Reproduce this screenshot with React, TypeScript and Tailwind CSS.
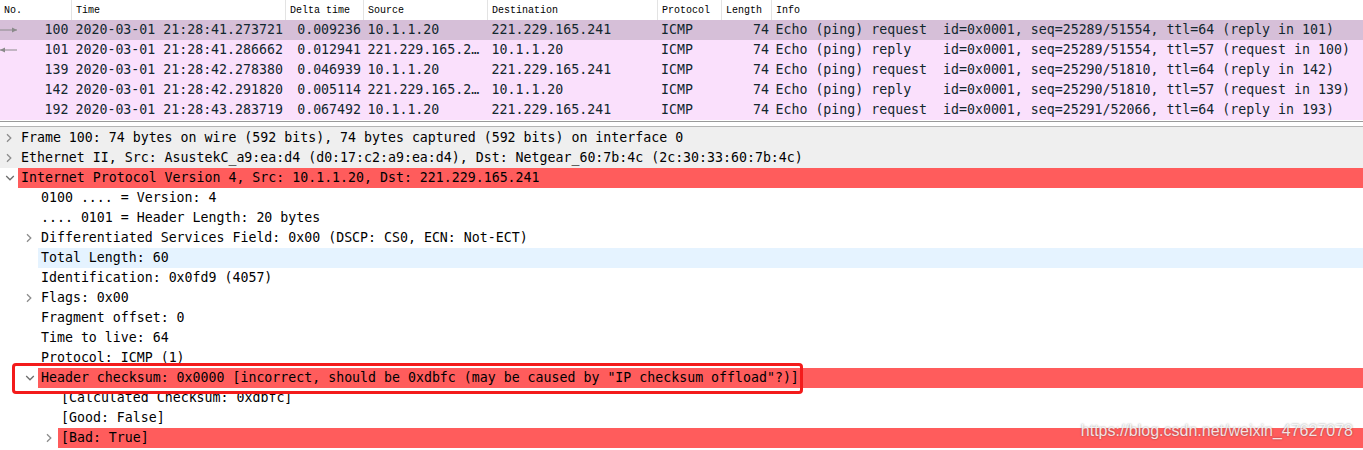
import React from "react";

type Pkt = {
  no: string;
  time: string;
  delta: string;
  src: string;
  dst: string;
  info: string;
  sel?: boolean;
  arrow?: "right" | "left";
};

const packets: Pkt[] = [
  {
    no: "100",
    time: "2020-03-01 21:28:41.273721",
    delta: "0.009236",
    src: "10.1.1.20",
    dst: "221.229.165.241",
    info: "Echo (ping) request  id=0x0001, seq=25289/51554, ttl=64 (reply in 101)",
    sel: true,
    arrow: "right",
  },
  {
    no: "101",
    time: "2020-03-01 21:28:41.286662",
    delta: "0.012941",
    src: "221.229.165.2…",
    dst: "10.1.1.20",
    info: "Echo (ping) reply    id=0x0001, seq=25289/51554, ttl=57 (request in 100)",
    arrow: "left",
  },
  {
    no: "139",
    time: "2020-03-01 21:28:42.278380",
    delta: "0.046939",
    src: "10.1.1.20",
    dst: "221.229.165.241",
    info: "Echo (ping) request  id=0x0001, seq=25290/51810, ttl=64 (reply in 142)",
  },
  {
    no: "142",
    time: "2020-03-01 21:28:42.291820",
    delta: "0.005114",
    src: "221.229.165.2…",
    dst: "10.1.1.20",
    info: "Echo (ping) reply    id=0x0001, seq=25290/51810, ttl=57 (request in 139)",
  },
  {
    no: "192",
    time: "2020-03-01 21:28:43.283719",
    delta: "0.067492",
    src: "10.1.1.20",
    dst: "221.229.165.241",
    info: "Echo (ping) request  id=0x0001, seq=25291/52066, ttl=64 (reply in 193)",
  },
];

type Node = {
  text: string;
  level: number;
  toggle?: "closed" | "open";
  bg?: "gray" | "red" | "blue";
};

const nodes: Node[] = [
  { text: "Frame 100: 74 bytes on wire (592 bits), 74 bytes captured (592 bits) on interface 0", level: 0, toggle: "closed", bg: "gray" },
  { text: "Ethernet II, Src: AsustekC_a9:ea:d4 (d0:17:c2:a9:ea:d4), Dst: Netgear_60:7b:4c (2c:30:33:60:7b:4c)", level: 0, toggle: "closed", bg: "gray" },
  { text: "Internet Protocol Version 4, Src: 10.1.1.20, Dst: 221.229.165.241", level: 0, toggle: "open", bg: "red" },
  { text: "0100 .... = Version: 4", level: 1 },
  { text: ".... 0101 = Header Length: 20 bytes", level: 1 },
  { text: "Differentiated Services Field: 0x00 (DSCP: CS0, ECN: Not-ECT)", level: 1, toggle: "closed" },
  { text: "Total Length: 60", level: 1, bg: "blue" },
  { text: "Identification: 0x0fd9 (4057)", level: 1 },
  { text: "Flags: 0x00", level: 1, toggle: "closed" },
  { text: "Fragment offset: 0", level: 1 },
  { text: "Time to live: 64", level: 1 },
  { text: "Protocol: ICMP (1)", level: 1 },
  { text: 'Header checksum: 0x0000 [incorrect, should be 0xdbfc (may be caused by "IP checksum offload"?)]', level: 1, toggle: "open", bg: "red" },
  { text: "[Calculated Checksum: 0xdbfc]", level: 2 },
  { text: "[Good: False]", level: 2 },
  { text: "[Bad: True]", level: 2, toggle: "closed", bg: "red" },
];

function Chevron({ kind }: { kind: "closed" | "open" }) {
  return (
    <svg width="10" height="10" viewBox="0 0 10 10" className="block">
      {kind === "closed" ? (
        <path d="M2 1.2 L5.8 5 L2 8.8" fill="none" stroke="#8c8c8c" strokeWidth="1.3" />
      ) : (
        <path d="M1.2 3 L5 6.8 L8.8 3" fill="none" stroke="#6e6e6e" strokeWidth="1.3" />
      )}
    </svg>
  );
}

function RelArrow({ dir }: { dir: "right" | "left" }) {
  return (
    <svg width="18" height="8" viewBox="0 0 18 8" className="block">
      <line x1="0" y1="4" x2="17" y2="4" stroke="#8a8a8a" strokeWidth="1" />
      {dir === "right" ? (
        <path d="M12 1.5 L17 4 L12 6.5 Z" fill="#8a8a8a" />
      ) : (
        <path d="M5 1.5 L0 4 L5 6.5 Z" fill="#8a8a8a" />
      )}
    </svg>
  );
}

const headCell = "h-5 flex items-center pt-[2px] px-[4px] border-r border-[#e3e3e3] shrink-0";

export default function App() {
  return (
    <div className="relative w-[1363px] h-[450px] overflow-hidden bg-white font-['DejaVu_Sans_Mono',monospace] text-[13.25px] leading-5 text-black">
      {/* Packet list */}
      <div>
        <div className="flex h-5 bg-white font-['Liberation_Mono',monospace] text-[10px] text-black">
          <div className={`${headCell} w-[72px]`}>No.</div>
          <div className={`${headCell} w-[214px]`}>Time</div>
          <div className={`${headCell} w-[78px]`}>Delta time</div>
          <div className={`${headCell} w-[124px]`}>Source</div>
          <div className={`${headCell} w-[170px]`}>Destination</div>
          <div className={`${headCell} w-[64px]`}>Protocol</div>
          <div className={`${headCell} w-[50px]`}>Length</div>
          <div className="h-5 flex items-center pt-[2px] px-[4px] flex-1">Info</div>
        </div>
        {packets.map((p) => (
          <div
            key={p.no}
            className={`flex h-5 whitespace-pre text-[#12272e] ${p.sel ? "bg-[#d6bfd8]" : "bg-[#fae0fc]"}`}
          >
            <div className="w-[72px] shrink-0 flex items-center justify-between pr-[3.5px]">
              <span className="w-[18px]">{p.arrow ? <RelArrow dir={p.arrow} /> : null}</span>
              <span>{p.no}</span>
            </div>
            <div className="w-[214px] shrink-0 pl-[3.5px]">{p.time}</div>
            <div className="w-[78px] shrink-0 pr-[3px] text-right">{p.delta}</div>
            <div className="w-[124px] shrink-0 pl-[3.5px] overflow-hidden">{p.src}</div>
            <div className="w-[170px] shrink-0 pl-[3.5px]">{p.dst}</div>
            <div className="w-[64px] shrink-0 pl-[3px]">ICMP</div>
            <div className="w-[50px] shrink-0 pr-[3px] text-right">74</div>
            <div className="flex-1 pl-[3.5px]">{p.info}</div>
          </div>
        ))}
      </div>

      {/* Splitter */}
      <div className="h-px bg-white" />
      <div className="h-px bg-[#9a9a9a]" />
      <div className="h-[4px] bg-white" />
      <div className="h-px bg-[#b4b4b4]" />
      <div className="h-px bg-[#efefef]" />

      {/* Packet details */}
      <div>
        {nodes.map((n, i) => {
          const pl = n.level === 0 ? "pl-[4px]" : n.level === 1 ? "pl-[24px]" : "pl-[44px]";
          const rowBg = n.bg === "gray" ? "bg-[#efefef]" : "";
          const textBg =
            n.bg === "red" ? "bg-[#ff5c5c]" : n.bg === "blue" ? "bg-[#e5f3ff]" : "";
          return (
            <div key={i} className={`flex h-5 whitespace-pre ${pl} ${rowBg}`}>
              <div className="w-[14px] shrink-0 flex items-center pl-[1px]">
                {n.toggle ? <Chevron kind={n.toggle} /> : null}
              </div>
              <div className={`flex-1 pl-[3px] ${textBg}`}>{n.text}</div>
            </div>
          );
        })}
      </div>

      {/* Annotation box */}
      <div className="absolute left-[12px] top-[363px] w-[791px] h-[31px] border-[3px] border-[#f31b1b] rounded-[4px]" />

      {/* Watermark */}
      <div className="absolute right-[10px] top-[421px] font-['Liberation_Sans',Arial,sans-serif] text-[16px] leading-5 text-white/85 [text-shadow:0_0_2px_rgba(0,0,0,0.45)]">
        https://blog.csdn.net/weixin_47627078
      </div>
    </div>
  );
}
